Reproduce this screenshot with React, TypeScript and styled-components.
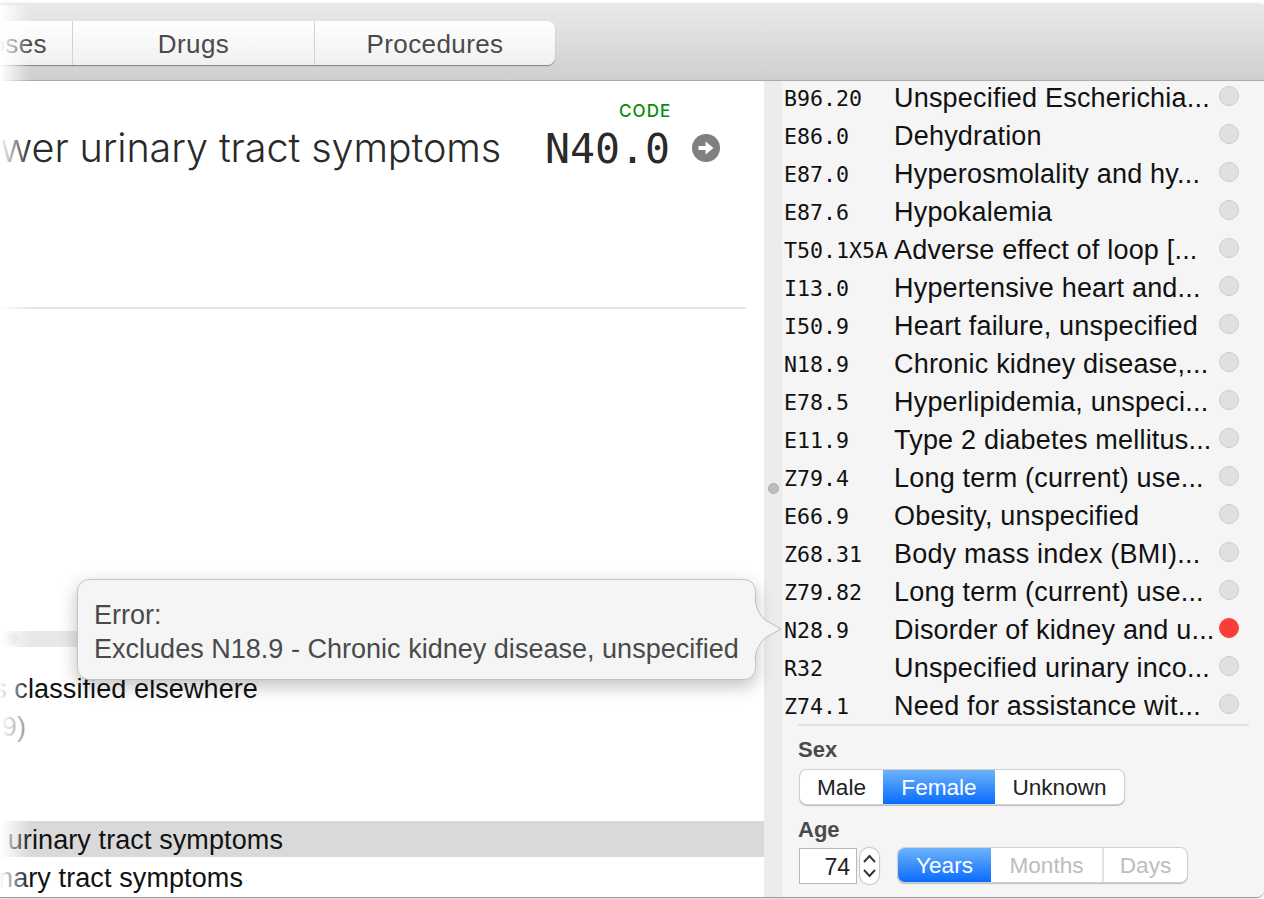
import { FC } from 'react';
import styled, { createGlobalStyle } from 'styled-components';

const CODES: [string, string, boolean?][] = [
  ['B96.20', 'Unspecified Escherichia...'],
  ['E86.0', 'Dehydration'],
  ['E87.0', 'Hyperosmolality and hy...'],
  ['E87.6', 'Hypokalemia'],
  ['T50.1X5A', 'Adverse effect of loop [...'],
  ['I13.0', 'Hypertensive heart and...'],
  ['I50.9', 'Heart failure, unspecified'],
  ['N18.9', 'Chronic kidney disease,...'],
  ['E78.5', 'Hyperlipidemia, unspeci...'],
  ['E11.9', 'Type 2 diabetes mellitus...'],
  ['Z79.4', 'Long term (current) use...'],
  ['E66.9', 'Obesity, unspecified'],
  ['Z68.31', 'Body mass index (BMI)...'],
  ['Z79.82', 'Long term (current) use...'],
  ['N28.9', 'Disorder of kidney and u...', true],
  ['R32', 'Unspecified urinary inco...'],
  ['Z74.1', 'Need for assistance wit...'],
];

const App: FC = () => {
  return (
    <Page>
      <GlobalStyle />
      <Window>
        <Toolbar>
          <Tabs>
            <Tab $w={73} $end>Diagnoses</Tab>
            <Tab $w={242}>Drugs</Tab>
            <Tab $w={240}>Procedures</Tab>
          </Tabs>
        </Toolbar>
        <Main>
          <LeftPane>
            <CodeLabel>CODE</CodeLabel>
            <HeaderRow>
              <Title>with lower urinary tract symptoms</Title>
              <Code>N40.0</Code>
              <GoIcon viewBox="0 0 28 28">
                <circle cx="14" cy="14" r="14" fill="#808080" />
                <path d="M6.5 12h7V7.5L21.5 14l-8 6.5V16h-7z" fill="#fff" />
              </GoIcon>
            </HeaderRow>
            <Rule />
            <Track>
              <Knob />
            </Track>
            <ClippedRow $end={258} $mt={23}>
              <span>diseases classified elsewhere</span>
            </ClippedRow>
            <ClippedRow $end={26} $muted>
              <span>(N40.0-N40.9)</span>
            </ClippedRow>
            <ClippedRow $end={283} $mt={75} $selected $h={36}>
              <span>with lower urinary tract symptoms</span>
            </ClippedRow>
            <ClippedRow $end={243} $mt={2}>
              <span>with urinary tract symptoms</span>
            </ClippedRow>
          </LeftPane>
          <Gutter>
            <Handle />
          </Gutter>
          <RightPane>
            <CodeList>
              {CODES.map(([code, name, error]) => (
                <CodeRow key={code + name}>
                  <CodeCell>{code}</CodeCell>
                  <NameCell>{name}</NameCell>
                  <Dot $error={error} />
                </CodeRow>
              ))}
            </CodeList>
            <Patient>
              <FieldLabel>Sex</FieldLabel>
              <Segments>
                <Segment $w={83}>Male</Segment>
                <Segment $w={112} $active>Female</Segment>
                <Segment $w={129}>Unknown</Segment>
              </Segments>
              <FieldLabel $mt={13}>Age</FieldLabel>
              <AgeRow>
                <AgeInput>74</AgeInput>
                <Stepper>
                  <svg width="19" height="36" viewBox="0 0 19 36" fill="none" stroke="#333" strokeWidth="1.9">
                    <path d="M4 14l5.5-6 5.5 6" />
                    <path d="M4 22l5.5 6 5.5-6" />
                  </svg>
                </Stepper>
                <UnitSegments>
                  <Segment $w={93} $active>Years</Segment>
                  <Segment $w={113} $disabled $divider>Months</Segment>
                  <Segment $w={83} $disabled>Days</Segment>
                </UnitSegments>
              </AgeRow>
            </Patient>
          </RightPane>
        </Main>
        <LeftFade />
        <Popover>
          <div>Error:</div>
          <div>Excludes N18.9 - Chronic kidney disease, unspecified</div>
          <PopoverArrow viewBox="0 0 28 64">
            <path d="M0 2c1 10 5 16 10 21l16 9-16 9C5 46 1 52 0 62" fill="#f5f5f5" stroke="#bdbdbd" strokeWidth="1" />
          </PopoverArrow>
        </Popover>
      </Window>
    </Page>
  );
};

const GlobalStyle = createGlobalStyle`
  html, body {
    margin: 0;
    padding: 0;
    background: #fff;
    overflow: hidden;
  }
`;
const Page = styled.div`
  width: 1264px;
  height: 899px;
  padding-top: 5px;
  box-sizing: border-box;
  overflow: hidden;
  background: #fff;
  font-family: 'Liberation Sans', Arial, sans-serif;
`;
const Window = styled.div`
  position: relative;
  width: 1264px;
  height: 893px;
  display: flex;
  flex-direction: column;
  border-bottom-right-radius: 8px;
  border-bottom: 1px solid #9a9a9a;
  box-shadow: 0 0 4px rgba(0, 0, 0, 0.25);
  box-sizing: border-box;
  background: #fff;
  overflow: hidden;
`;
const Toolbar = styled.div`
  position: relative;
  z-index: 1;
  flex-shrink: 0;
  height: 76px;
  padding-top: 16px;
  box-sizing: border-box;
  background: linear-gradient(#e9e9e9, #cfcfcf);
  border-bottom: 1px solid #ababab;
`;
const Tabs = styled.div`
  display: flex;
  width: 555px;
  height: 44px;
  border-radius: 0 8px 8px 0;
  background: linear-gradient(#ffffff, #f0f0f0);
  box-shadow: 0 1px 1px rgba(0, 0, 0, 0.4);
  overflow: hidden;
`;
const Tab = styled.div<{ $w: number; $end?: boolean }>`
  display: flex;
  align-items: center;
  justify-content: ${(p) => (p.$end ? 'flex-end' : 'center')};
  width: ${(p) => p.$w}px;
  padding-top: 2px;
  padding-right: ${(p) => (p.$end ? '25px' : '0')};
  box-sizing: border-box;
  flex-shrink: 0;
  overflow: hidden;
  white-space: nowrap;
  font-size: 26px;
  letter-spacing: 0.4px;
  color: #4a4a4a;
  border-right: 1px solid #d2d2d2;
  &:last-child {
    border-right: none;
  }
`;
const Main = styled.div`
  display: flex;
  flex: 1;
  min-height: 0;
`;
const LeftPane = styled.div`
  width: 764px;
  flex-shrink: 0;
  display: flex;
  flex-direction: column;
  padding-top: 21px;
  box-sizing: border-box;
  overflow: hidden;
`;
const CodeLabel = styled.div`
  align-self: flex-start;
  margin-left: 619px;
  height: 18px;
  line-height: 18px;
  font-family: Inter, sans-serif;
  font-size: 17px;
  font-weight: 500;
  letter-spacing: 1.1px;
  color: #0b8a0b;
`;
const HeaderRow = styled.div`
  display: flex;
  align-items: center;
  justify-content: flex-end;
  width: 720px;
  height: 50px;
  margin-top: 3px;
  overflow: hidden;
  white-space: nowrap;
`;
const Title = styled.div`
  font-family: Inter, sans-serif;
  font-size: 39.6px;
  font-weight: 300;
  letter-spacing: -0.1px;
  color: #2a2a2a;
`;
const Code = styled.div`
  margin-left: 44px;
  font-family: 'DejaVu Sans Mono', monospace;
  font-size: 41.5px;
  color: #2a2a2a;
`;
const GoIcon = styled.svg`
  width: 28px;
  height: 28px;
  margin-left: 22px;
  flex-shrink: 0;
`;
const Rule = styled.div`
  width: 746px;
  height: 2px;
  margin-top: 134px;
  background: #e6e6e6;
  flex-shrink: 0;
`;
const Track = styled.div`
  position: relative;
  width: 200px;
  height: 16px;
  margin-top: 322px;
  background: #e8e8e8;
  flex-shrink: 0;
`;
const Knob = styled.div`
  position: absolute;
  left: 6px;
  top: 2px;
  width: 12px;
  height: 12px;
  border-radius: 50%;
  background: #d8d8d8;
`;
const ClippedRow = styled.div<{ $end: number; $mt?: number; $muted?: boolean; $selected?: boolean; $h?: number }>`
  flex-shrink: 0;
  height: ${(p) => p.$h ?? 38}px;
  margin-top: ${(p) => p.$mt ?? 0}px;
  background: ${(p) => (p.$selected ? '#d9d9d9' : 'transparent')};
  font-size: 27px;
  letter-spacing: 0.1px;
  line-height: 38px;
  color: ${(p) => (p.$muted ? '#8a8a8a' : '#111')};
  white-space: nowrap;
  display: flex;
  & > span {
    display: flex;
    justify-content: flex-end;
    width: ${(p) => p.$end}px;
    overflow: hidden;
    flex-shrink: 0;
  }
`;
const Gutter = styled.div`
  width: 18px;
  flex-shrink: 0;
  display: flex;
  align-items: center;
  justify-content: center;
  background: #ececec;
`;
const Handle = styled.div`
  width: 11px;
  height: 11px;
  margin-top: -2px;
  border-radius: 50%;
  background: #bdbdbd;
  border: 1px solid #aaa;
  box-sizing: border-box;
`;
const RightPane = styled.div`
  flex: 1;
  display: flex;
  flex-direction: column;
  background: #f5f5f5;
  min-width: 0;
`;
const CodeList = styled.div`
  margin-top: -2px;
  padding-left: 2px;
`;
const CodeRow = styled.div`
  display: flex;
  align-items: center;
  height: 38px;
  white-space: nowrap;
`;
const CodeCell = styled.div`
  width: 110px;
  flex-shrink: 0;
  font-family: 'DejaVu Sans Mono', monospace;
  font-size: 21.6px;
  color: #111;
`;
const NameCell = styled.div`
  width: 325px;
  flex-shrink: 0;
  font-size: 27px;
  letter-spacing: 0.2px;
  color: #111;
`;
const Dot = styled.div<{ $error?: boolean }>`
  width: 20px;
  height: 20px;
  margin-top: -4px;
  border-radius: 50%;
  box-sizing: border-box;
  background: ${(p) => (p.$error ? '#fb3d3a' : '#e0e0e0')};
  border: 1px solid ${(p) => (p.$error ? '#fb3d3a' : '#cdcdcd')};
`;
const Patient = styled.div`
  margin: -1px 15px 0 16px;
  border-top: 2px solid #e2e2e2;
`;
const FieldLabel = styled.div<{ $mt?: number }>`
  height: 26px;
  line-height: 26px;
  margin-top: ${(p) => p.$mt ?? 11}px;
  font-size: 22px;
  font-weight: 700;
  color: #4a4a4a;
`;
const Segments = styled.div`
  display: inline-flex;
  margin: 7px 0 0 2px;
  height: 34px;
  border-radius: 7px;
  overflow: hidden;
  vertical-align: top;
  box-shadow: 0 0 0 1px #d0d0d0, 0 1px 1px 1px #bdbdbd;
`;
const Segment = styled.div<{ $w: number; $active?: boolean; $disabled?: boolean; $divider?: boolean }>`
  display: flex;
  align-items: center;
  justify-content: center;
  width: ${(p) => p.$w}px;
  padding-top: 1px;
  font-size: 22.6px;
  box-sizing: border-box;
  color: ${(p) => (p.$active ? '#fff' : p.$disabled ? '#bdbdbd' : '#222')};
  background: ${(p) => (p.$active ? 'linear-gradient(#6cb3fb, #0a6cff)' : '#fff')};
  border-right: ${(p) => (p.$divider ? '2px solid #e2e2e2' : 'none')};
`;
const AgeRow = styled.div`
  display: flex;
  align-items: flex-start;
  margin-top: 5px;
`;
const AgeInput = styled.div`
  width: 58px;
  height: 36px;
  margin-left: 1px;
  padding-right: 6px;
  box-sizing: border-box;
  line-height: 36px;
  text-align: right;
  font-size: 23px;
  color: #222;
  background: #fff;
  border: 1px solid #b9b9b9;
`;
const Stepper = styled.div`
  width: 19px;
  height: 36px;
  margin-left: 3px;
  display: flex;
  justify-content: center;
  border-radius: 9px;
  background: #fff;
  box-shadow: 0 0 1px 1px #c4c4c4;
  overflow: hidden;
`;
const UnitSegments = styled(Segments)`
  margin: 0 0 0 19px;
`;
const LeftFade = styled.div`
  position: absolute;
  z-index: 2;
  left: 0;
  top: 0;
  bottom: 0;
  width: 30px;
  background: linear-gradient(to right, #fff, rgba(255, 255, 255, 0));
  pointer-events: none;
`;
const Popover = styled.div`
  position: absolute;
  z-index: 3;
  left: 77px;
  top: 574px;
  width: 679px;
  height: 101px;
  padding: 18px 16px 0;
  box-sizing: border-box;
  background: #f5f5f5;
  border: 1px solid #c4c4c4;
  border-radius: 12px;
  box-shadow: 0 6px 18px rgba(0, 0, 0, 0.25);
  font-size: 27px;
  line-height: 34px;
  letter-spacing: 0.02px;
  color: #4a4a4a;
  white-space: nowrap;
`;
const PopoverArrow = styled.svg`
  position: absolute;
  left: 677px;
  top: 17px;
  width: 28px;
  height: 64px;
  overflow: visible;
`;

export default App;
